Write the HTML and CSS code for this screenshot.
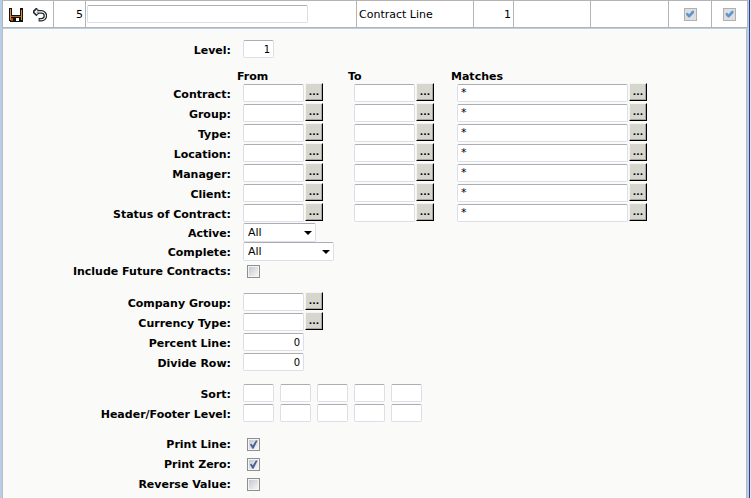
FILE: index.html
```html
<!DOCTYPE html>
<html lang="en">
<head>
<meta charset="utf-8">
<title>Contract Line</title>
<link rel="stylesheet" href="styles.css">
</head>
<body>
<main class="frame">
  <table class="line-row">
    <colgroup>
      <col class="col-tools"><col class="col-num"><col><col class="col-type"><col class="col-level"><col class="col-blank"><col class="col-blank-wide"><col class="col-flag"><col class="col-flag-end">
    </colgroup>
    <tbody>
      <tr>
        <td>
          <div class="tools">
            <button class="tool" type="button" aria-label="Save">
              <svg width="14" height="14" viewBox="0 0 14 14" shape-rendering="crispEdges">
                <path d="M0 0H14V14H1L0 13Z" fill="#111"/>
                <path d="M1 1H2V12H1ZM12 2H13V12H12Z" fill="#e08a2c"/>
                <path d="M3 0H11V7H3Z" fill="#fff"/>
                <path d="M2 8H12V9H2Z" fill="#b8691c"/>
                <path d="M7 10H10V13H7Z" fill="#fff"/>
                <path d="M2 10H4V13H2Z" fill="#9a5514"/>
              </svg>
            </button>
            <button class="tool" type="button" aria-label="Undo">
              <svg width="14" height="14" viewBox="0 0 14 14" fill="none">
                <path d="M4.6 .8 1.4 3.9 4.6 7M1.6 3.9H8.4A4 3.9 0 0 1 8.4 11.7H5.6" stroke="#23272e" stroke-width="3.6"/>
                <path d="M4.4 1.6 2 3.9 4.4 6.2M2 3.9H8.4A4 3.9 0 0 1 8.4 11.7H6.6" stroke="#fff" stroke-width="1.1"/>
              </svg>
            </button>
          </div>
        </td>
        <td class="num">5</td>
        <td class="name"><input class="box box-name" type="text" aria-label="Description"></td>
        <td>Contract Line</td>
        <td class="num">1</td>
        <td></td>
        <td></td>
        <td class="flag"><input class="check" type="checkbox" aria-label="Print line" checked disabled></td>
        <td class="flag"><input class="check" type="checkbox" aria-label="Print zero" checked disabled></td>
      </tr>
    </tbody>
  </table>

  <form class="pane">
    <section class="group">
      <div class="row"><label class="label" for="level">Level:</label><input class="box box-small right" id="level" type="text" value="1"></div>
    </section>

    <section class="group">
      <div class="heads"><span class="head-from">From</span><span class="head-to">To</span><span>Matches</span></div>
      <div class="row"><label class="label" for="contract">Contract:</label>
        <span class="pick"><input class="box box-code" id="contract" type="text"><button class="more" type="button">...</button></span>
        <span class="pick"><input class="box box-code" type="text" aria-label="Contract to"><button class="more" type="button">...</button></span>
        <span class="pick"><input class="box box-match" type="text" aria-label="Contract matches" value="*"><button class="more" type="button">...</button></span></div>
      <div class="row"><label class="label" for="group">Group:</label>
        <span class="pick"><input class="box box-code" id="group" type="text"><button class="more" type="button">...</button></span>
        <span class="pick"><input class="box box-code" type="text" aria-label="Group to"><button class="more" type="button">...</button></span>
        <span class="pick"><input class="box box-match" type="text" aria-label="Group matches" value="*"><button class="more" type="button">...</button></span></div>
      <div class="row"><label class="label" for="type">Type:</label>
        <span class="pick"><input class="box box-code" id="type" type="text"><button class="more" type="button">...</button></span>
        <span class="pick"><input class="box box-code" type="text" aria-label="Type to"><button class="more" type="button">...</button></span>
        <span class="pick"><input class="box box-match" type="text" aria-label="Type matches" value="*"><button class="more" type="button">...</button></span></div>
      <div class="row"><label class="label" for="location">Location:</label>
        <span class="pick"><input class="box box-code" id="location" type="text"><button class="more" type="button">...</button></span>
        <span class="pick"><input class="box box-code" type="text" aria-label="Location to"><button class="more" type="button">...</button></span>
        <span class="pick"><input class="box box-match" type="text" aria-label="Location matches" value="*"><button class="more" type="button">...</button></span></div>
      <div class="row"><label class="label" for="manager">Manager:</label>
        <span class="pick"><input class="box box-code" id="manager" type="text"><button class="more" type="button">...</button></span>
        <span class="pick"><input class="box box-code" type="text" aria-label="Manager to"><button class="more" type="button">...</button></span>
        <span class="pick"><input class="box box-match" type="text" aria-label="Manager matches" value="*"><button class="more" type="button">...</button></span></div>
      <div class="row"><label class="label" for="client">Client:</label>
        <span class="pick"><input class="box box-code" id="client" type="text"><button class="more" type="button">...</button></span>
        <span class="pick"><input class="box box-code" type="text" aria-label="Client to"><button class="more" type="button">...</button></span>
        <span class="pick"><input class="box box-match" type="text" aria-label="Client matches" value="*"><button class="more" type="button">...</button></span></div>
      <div class="row"><label class="label" for="status">Status of Contract:</label>
        <span class="pick"><input class="box box-code" id="status" type="text"><button class="more" type="button">...</button></span>
        <span class="pick"><input class="box box-code" type="text" aria-label="Status to"><button class="more" type="button">...</button></span>
        <span class="pick"><input class="box box-match" type="text" aria-label="Status matches" value="*"><button class="more" type="button">...</button></span></div>
      <div class="row row-select"><label class="label" for="active">Active:</label><span class="drop"><select class="select-short" id="active"><option>All</option></select></span></div>
      <div class="row row-select"><label class="label" for="complete">Complete:</label><span class="drop"><select class="select-long" id="complete"><option>All</option></select></span></div>
      <div class="row row-check"><label class="label" for="future">Include Future Contracts:</label><input class="check" id="future" type="checkbox"></div>
    </section>

    <section class="group">
      <div class="row"><label class="label" for="company">Company Group:</label><span class="pick"><input class="box box-code" id="company" type="text"><button class="more" type="button">...</button></span></div>
      <div class="row"><label class="label" for="currency">Currency Type:</label><span class="pick"><input class="box box-code" id="currency" type="text"><button class="more" type="button">...</button></span></div>
      <div class="row"><label class="label" for="percent">Percent Line:</label><input class="box box-code right" id="percent" type="text" value="0"></div>
      <div class="row"><label class="label" for="divide">Divide Row:</label><input class="box box-code right" id="divide" type="text" value="0"></div>
    </section>

    <section class="group">
      <div class="row"><label class="label" for="sort">Sort:</label>
        <span class="levels"><input class="box box-small" id="sort" type="text"><input class="box box-small" type="text" aria-label="Sort 2"><input class="box box-small" type="text" aria-label="Sort 3"><input class="box box-small" type="text" aria-label="Sort 4"><input class="box box-small" type="text" aria-label="Sort 5"></span></div>
      <div class="row"><label class="label" for="header">Header/Footer Level:</label>
        <span class="levels"><input class="box box-small" id="header" type="text"><input class="box box-small" type="text" aria-label="Level 2"><input class="box box-small" type="text" aria-label="Level 3"><input class="box box-small" type="text" aria-label="Level 4"><input class="box box-small" type="text" aria-label="Level 5"></span></div>
    </section>

    <section class="group">
      <div class="row row-check"><label class="label" for="print-line">Print Line:</label><input class="check" id="print-line" type="checkbox" checked></div>
      <div class="row row-check"><label class="label" for="print-zero">Print Zero:</label><input class="check" id="print-zero" type="checkbox" checked></div>
      <div class="row row-check"><label class="label" for="reverse">Reverse Value:</label><input class="check" id="reverse" type="checkbox"></div>
    </section>
  </form>
</main>
</body>
</html>
```
FILE: styles.css
```css
* {
  box-sizing: border-box;
}

body {
  margin: 0;
  background: #e4e4ea;
  color: #000;
  font: 11px/14px "DejaVu Sans", Verdana, sans-serif;
}

input,
select,
button {
  margin: 0;
  font: inherit;
  color: inherit;
}

/* Window edge: pale blue rails with a navy line on the right */
.frame {
  display: flex;
  flex-direction: column;
  min-height: 100vh;
  margin-right: 1px;
  padding: 0 1px 0 2px;
  border-right: 1px solid #2f3b8c;
  background: #b5cfe8;
}

/* Summary line */
.line-row {
  width: 100%;
  table-layout: fixed;
  border-collapse: collapse;
  background: #fff;
}

.line-row td {
  height: 27px;
  padding: 1px 2px 0;
  border: 1px solid #b4b4b4;
}

.col-tools { width: 51px; }
.col-num { width: 32px; }
.col-type { width: 117px; }
.col-level { width: 40px; }
.col-blank { width: 77px; }
.col-blank-wide { width: 78px; }
.col-flag { width: 43px; }
.col-flag-end { width: 36px; }

.line-row .num {
  text-align: right;
}

.line-row .name {
  padding: 0 1px;
}

.line-row .flag {
  padding-top: 0;
}

.line-row .box,
.line-row .check {
  display: block;
  margin: 0 auto 0 0;
}

.line-row .check {
  margin: 0 auto;
}

.tools {
  display: flex;
  gap: 10px;
  padding-left: 4px;
}

.tool {
  display: flex;
  padding: 0;
  border: 0;
  background: none;
}

/* Detail pane */
.pane {
  display: flex;
  flex: 1;
  flex-direction: column;
  gap: 11px;
  padding: 10px 0 4px;
  border: 1px solid #b5cfe8;
  border-left-color: #c0bcba;
  box-shadow: inset -1px 0 #b9b9bd;
  background: #fafaf8;
}

.row {
  display: flex;
  align-items: flex-start;
  height: 20px;
}

.row > .box {
  margin-top: 1px;
}

.label,
.heads {
  font-weight: bold;
}

.label {
  flex: none;
  width: 228px;
  margin-right: 12px;
  padding-top: 5px;
  text-align: right;
}

.heads {
  display: flex;
  height: 13px;
  padding-left: 234px;
  line-height: 14px;
}

.head-from { width: 111px; }
.head-to { width: 103px; }

.box {
  height: 18px;
  padding: 0 3px 1px;
  border: 1px solid #dcdfe8;
  border-top-color: #abadb3;
  border-radius: 2px;
  background: #fff;
  outline: 0;
}

.box-name { width: 221px; }
.box-small { width: 31px; }
.box-code { width: 61px; }
.box-match { width: 171px; }

.box.right {
  padding: 1px 3px 0;
  font-size: 10px;
  text-align: right;
}

.pick {
  display: flex;
  gap: 1px;
  margin-right: 31px;
}

.pick + .pick {
  margin-right: 23px;
}

.pick .box,
.levels .box {
  margin-top: 1px;
}

.more {
  width: 18px;
  height: 18px;
  padding: 0;
  border: 1px solid #000;
  border-top-color: #f4f4f0;
  border-left-color: #f4f4f0;
  box-shadow: inset -1px -1px #a6a69e;
  background: #d6d6ce;
  font-size: 9px;
  font-weight: bold;
  line-height: 14px;
}

.levels {
  display: flex;
  gap: 6px;
}

.row-select {
  height: 19px;
}

.row-select .label {
  padding-top: 4px;
}

.drop {
  position: relative;
}

.drop::after {
  content: "";
  position: absolute;
  top: 8px;
  right: 4px;
  width: 8px;
  height: 4px;
  background: #000;
  clip-path: polygon(0 0, 100% 0, 50% 100%);
  pointer-events: none;
}

select {
  display: block;
  height: 19px;
  padding: 1px 4px 0;
  border: 1px solid #dcdfe8;
  border-top-color: #abadb3;
  border-radius: 2px;
  background: #fff;
  appearance: none;
}

.select-short { width: 73px; }
.select-long { width: 91px; }

.row-check .check {
  margin: 4px;
}

.row-check .label {
  padding-top: 4px;
}

.check {
  position: relative;
  width: 13px;
  height: 13px;
  border: 1px solid #8e8f8f;
  background: linear-gradient(135deg, #c4c8d0, #f6f6f6) content-box, #f4f4f4;
  padding: 1px;
  appearance: none;
}

.check:disabled {
  border-color: #b1b1b1;
  background: #dedede;
}

.check:checked::after {
  content: "";
  position: absolute;
  inset: 1px;
  background: #4a5f97;
  clip-path: polygon(10% 50%, 28% 42%, 42% 62%, 76% 6%, 96% 6%, 50% 98%, 38% 98%);
}

.check:disabled:checked::after {
  background: #5d95cf;
  clip-path: polygon(8% 40%, 24% 36%, 40% 52%, 74% 14%, 94% 14%, 94% 40%, 46% 88%, 34% 88%, 8% 62%);
}
```
